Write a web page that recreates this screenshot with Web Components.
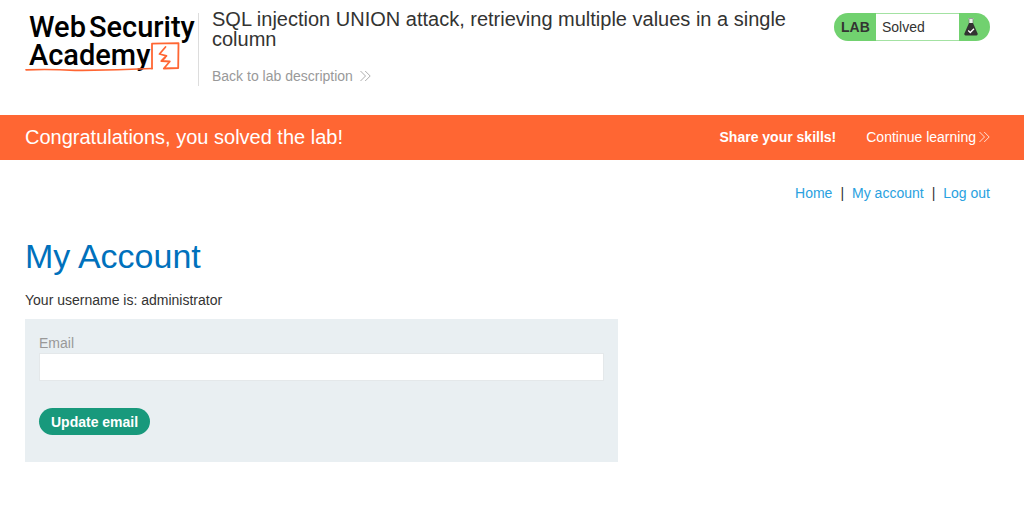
<!DOCTYPE html>
<html lang="en">
<head>
<meta charset="utf-8">
<meta name="viewport" content="width=device-width, initial-scale=1">
<title>SQL injection UNION attack, retrieving multiple values in a single column</title>
<style>
body { margin: 0; background: #fff; color: #333332; font: 14px/20px "Liberation Sans", Arial, sans-serif; }
</style>
</head>
<body>
<lab-page></lab-page>

<template id="academy-logo">
<style>
:host { display: block; }
a { display: grid; color: #000; text-decoration: none; font: 500 29px/28px Roboto, "Liberation Sans", sans-serif; }
.text { grid-area: 1 / 1; padding-left: 4px; }
.line { display: flex; gap: 3px; }
svg { grid-area: 1 / 1; display: block; margin-top: 28px; }
</style>
<a href="#" aria-label="Web Security Academy">
<span class="text"><span class="line"><span>Web</span><span>Security</span></span><span class="line">Academy</span></span>
<svg width="156" height="32" viewBox="0 0 156 32" fill="none" stroke="#ff6633" stroke-linejoin="round" stroke-linecap="round">
<path d="M1 28.800Q25 28 50 29.300Q90 29.500 127 27.500" stroke-width="1.700"/>
<path d="M127 27.500V2.700L153.500 2.200L153.200 27L138.800 27.500L144.800 20.500L136.500 20L140 16.500" stroke-width="1.800"/>
<path d="M140.500 6L134.500 13L141.500 14.800L136.500 20" stroke-width="1.800"/>
</svg>
</a>
</template>

<template id="chevrons-icon">
<style>
:host { display: inline-flex; opacity: .8; }
svg { display: block; }
</style>
<svg width="11" height="12" viewBox="0 0 11 12" fill="none" stroke="currentColor" stroke-width="1"><path d="M.5 1L5.500 6L.5 11M5.200 1L10.200 6L5.200 11"/></svg>
</template>

<template id="lab-status">
<style>
:host { display: flex; box-sizing: border-box; width: 156px; height: 28px; border-radius: 14px; background: #71d16f; overflow: hidden; line-height: 26px; }
strong { width: 42px; box-sizing: border-box; padding: 1px 0 0 7px; }
.state { flex: 1; padding-left: 6px; background: #fff; border: solid #a3e2a2; border-width: 1px 0; }
.flask { width: 31px; display: flex; align-items: center; padding-left: 5px; box-sizing: border-box; }
</style>
<strong>LAB</strong><span class="state"><slot></slot></span>
<span class="flask"><svg width="14" height="18" viewBox="0 0 14 18"><path d="M4.500 0H9.500V1.500H9V5H5V1.500H4.500Z" fill="#e8f6e8"/><path d="M4.500 .5H9.500M5 1V5M9 1V5" stroke="#777" stroke-width=".7"/><path d="M5 5H9L13.600 15.500Q14 17.500 12.500 17.500H1.500Q0 17.500 .4 15.500Z" fill="#333332"/><path d="M4.200 12.500L6.300 14.500L10 10.800" fill="none" stroke="#fff" stroke-width="1.300"/></svg></span>
</template>

<template id="lab-header">
<style>
:host { display: flex; align-items: flex-start; padding: 13px 34px 29px 25px; }
.info { flex: 1; display: flex; flex-direction: column; align-items: flex-start; gap: 17px; min-height: 73px; border-left: 1px solid #dddddd; padding-left: 13px; margin-left: 4px; box-sizing: border-box; }
academy-logo { width: 169px; flex: none; }
h2 { margin: -4px 0 0; font-size: 20px; line-height: 20px; font-weight: 400; }
a { display: flex; align-items: center; gap: 7px; color: #999; text-decoration: none; }
lab-status { flex: none; margin-left: 24px; }
</style>
<academy-logo></academy-logo>
<div class="info"><h2>SQL injection UNION attack, retrieving multiple values in a single column</h2>
<a href="#">Back to lab description<chevrons-icon></chevrons-icon></a></div>
<lab-status>Solved</lab-status>
</template>

<template id="solved-banner">
<style>
:host { display: flex; align-items: center; padding: 0 34px 1px 25px; min-height: 44px; background: #ff6633; color: #fff; }
h4 { flex: 1; margin: 0; font-size: 20px; line-height: 24px; font-weight: 400; }
a { display: flex; align-items: center; gap: 3px; color: #fff; text-decoration: none; }
.links { display: flex; gap: 30px; }
</style>
<h4>Congratulations, you solved the lab!</h4>
<div class="links"><strong>Share your skills!</strong><a href="#">Continue learning<chevrons-icon></chevrons-icon></a></div>
</template>

<template id="top-links">
<style>
:host { display: block; padding: 23px 34px 0 25px; }
nav { display: flex; justify-content: flex-end; gap: 8px; }
a { color: #29a1e0; text-decoration: none; }
</style>
<nav><a href="#">Home</a><span>|</span><a href="#">My account</a><span>|</span><a href="#">Log out</a></nav>
</template>

<template id="email-form">
<style>
:host { display: block; width: 61.5%; }
form { display: flex; flex-direction: column; align-items: flex-start; padding: 14px 14px 27px; background: #e9eff2; }
label { color: #999; }
input { box-sizing: border-box; width: 100%; height: 28px; border: 1px solid #e4e8ea; padding: 0 6px; background: #fff; font: inherit; }
button { margin-top: 27px; height: 27px; border: 0; border-radius: 14px; padding: 0 12px; background: #18997c; color: #fff; font: inherit; font-weight: 700; }
</style>
<form><label for="email">Email</label><input id="email" type="email"><button type="button">Update email</button></form>
</template>

<template id="account-section">
<style>
:host { display: block; padding: 33px 34px 0 25px; }
h1 { margin: 0; font-size: 34px; line-height: 40px; font-weight: 400; color: #0071bc; }
p { margin: 14px 0 9px; }
</style>
<h1>My Account</h1>
<p>Your username is: administrator</p>
<email-form></email-form>
</template>

<template id="lab-page">
<style>
:host { display: block; }
</style>
<lab-header></lab-header>
<solved-banner></solved-banner>
<top-links></top-links>
<main><account-section></account-section></main>
</template>

<script>
for (const template of document.querySelectorAll("template")) {
  customElements.define(template.id, class extends HTMLElement {
    constructor() {
      super();
      this.attachShadow({ mode: "open" }).append(template.content.cloneNode(true));
    }
  });
}
</script>
</body>
</html>
